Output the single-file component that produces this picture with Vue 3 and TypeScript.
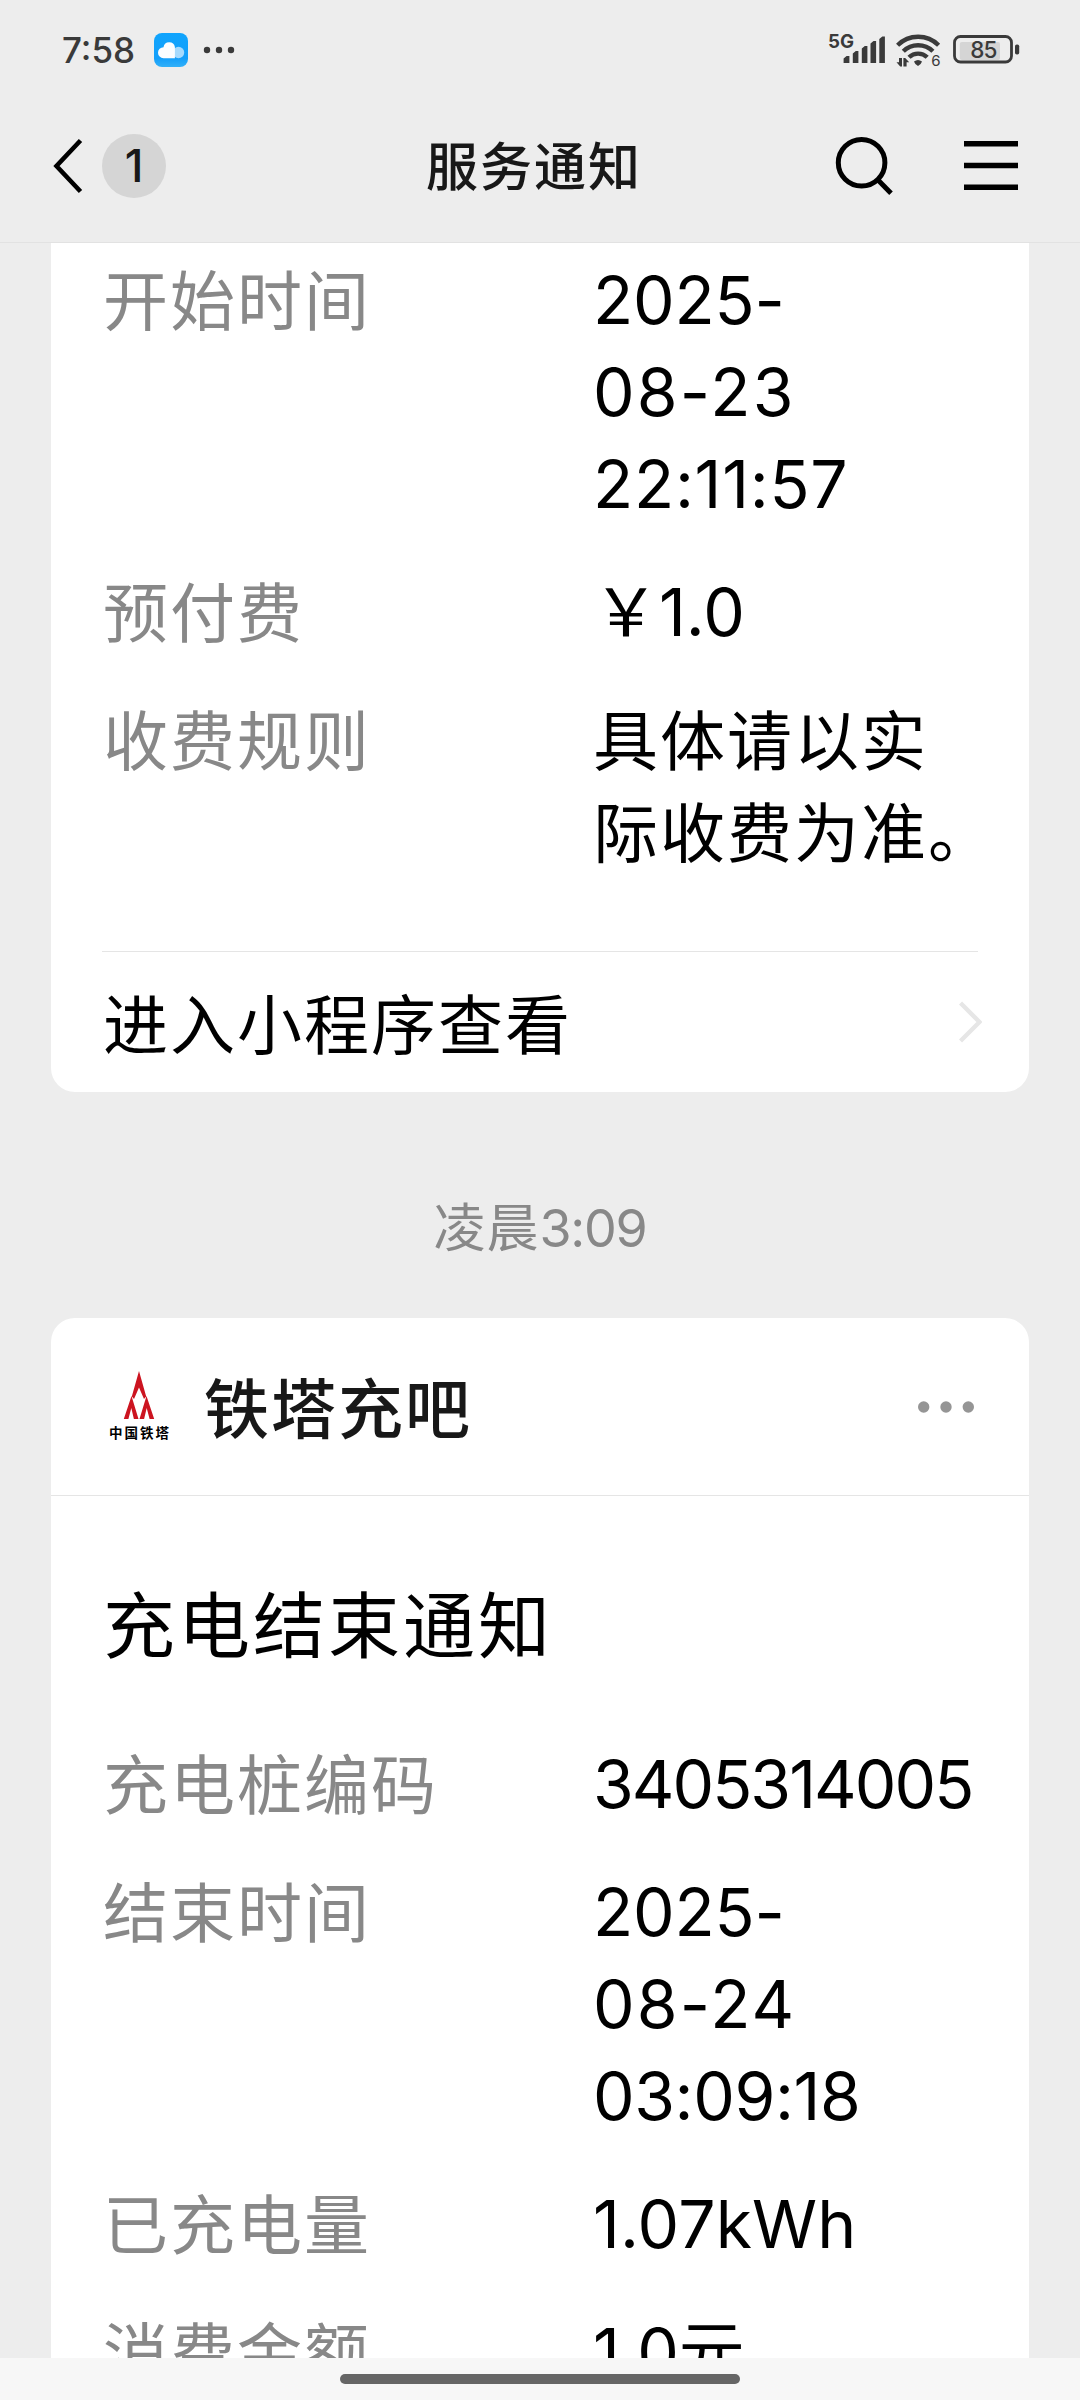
<script setup lang="ts">
interface Line {
  text: string
  spacing: number
  cjk?: boolean
}

interface Field {
  label: string
  value: Line[]
}

const startFields: Field[] = [
  {
    label: '开始时间',
    value: [
      { text: '2025-', spacing: -0.2 },
      { text: '08-23', spacing: 2.2 },
      { text: '22:11:57', spacing: 0.7 },
    ],
  },
  { label: '预付费', value: [{ text: '￥1.0', spacing: 0 }] },
  {
    label: '收费规则',
    value: [
      { text: '具体请以实', spacing: 2, cjk: true },
      { text: '际收费为准。', spacing: 2, cjk: true },
    ],
  },
]

const endFields: Field[] = [
  { label: '充电桩编码', value: [{ text: '3405314005', spacing: -1.95 }] },
  {
    label: '结束时间',
    value: [
      { text: '2025-', spacing: -0.2 },
      { text: '08-24', spacing: 2.2 },
      { text: '03:09:18', spacing: -0.4 },
    ],
  },
  { label: '已充电量', value: [{ text: '1.07kWh', spacing: 0.2 }] },
  { label: '消费金额', value: [{ text: '1.0元', spacing: 0 }] },
]
</script>

<template>
  <div class="screen">
    <div class="status">
      <span class="clock">7:58</span>
      <svg class="weather" width="34" height="34" viewBox="0 0 34 34">
        <defs>
          <linearGradient id="sky" x1="0" y1="0" x2="0" y2="1">
            <stop offset="0" stop-color="#0fa4fd" />
            <stop offset="0.75" stop-color="#149ffa" />
            <stop offset="1" stop-color="#32b0f8" />
          </linearGradient>
        </defs>
        <rect width="34" height="34" rx="8" fill="url(#sky)" />
        <circle cx="24.5" cy="19.5" r="5.7" fill="#a6dafd" />
        <path d="M9.5 25.2a5.5 5.5 0 0 1 0-11 5.8 5.8 0 0 1 11.4-.2V25.2z" fill="#fbfdff" />
      </svg>
      <svg class="more" width="32" height="8" viewBox="0 0 32 8">
        <circle cx="4" cy="4" r="3.2" />
        <circle cx="16" cy="4" r="3.2" />
        <circle cx="28" cy="4" r="3.2" />
      </svg>
      <svg class="signals" width="194" height="40" viewBox="0 0 194 40">
        <text class="net" x="0" y="18" textLength="26" lengthAdjust="spacingAndGlyphs">5G</text>
        <path
          d="M15.6 33v-4.5l3-2.500h2.800v7zM24.800 33v-9.500l3-2.500h2.600v12zM33.800 33v-14.500l3-2.500h2.600v17zM42.500 33v-19.500l3-2.500h2.600v22zM51.300 33v-24l3-2.500h2.600v26.500z"
        />
        <g fill="none" stroke="#3a3a3a" stroke-width="4.4">
          <path d="M69.600 15.300a29 29 0 0 1 41 0" />
          <path d="M75.300 21.300a21 21 0 0 1 29.600 0" />
          <path d="M81 27.300a13 13 0 0 1 18.200 0" />
        </g>
        <path d="M86 31.500q4-3.200 8 0l-1.400 2.600-2.600 1.800-2.600-1.800z" />
        <path d="M71 28h3v8.500h-1.800L68.500 32.200H71zM75.400 28h1.800l4 4.300h-2.600v4.200h-3.200z" />
        <text class="gen" x="103.300" y="36">6</text>
        <rect x="131.800" y="12" width="40.200" height="18" rx="2" fill="#d5d5d5" />
        <rect x="126.500" y="6.500" width="57" height="25.500" rx="6" fill="none" stroke="#3a3a3a" stroke-width="2.800" />
        <rect x="187" y="14.500" width="4.200" height="10" rx="1.800" />
        <text class="level" x="142.300" y="27.800" textLength="27" lengthAdjust="spacing">85</text>
      </svg>
    </div>

    <header class="nav">
      <svg class="back" width="30" height="56" viewBox="0 0 30 56">
        <path d="M27.500 2.500 3.500 28l24 25.500" fill="none" stroke="#000" stroke-width="4.600" />
      </svg>
      <span class="badge">1</span>
      <h1>服务通知</h1>
      <svg class="search" width="60" height="60" viewBox="0 0 60 60">
        <circle cx="27.600" cy="26.800" r="23.300" />
        <path d="M44.500 44.500 57 57.200" />
      </svg>
      <svg class="menu" width="54" height="50" viewBox="0 0 54 50">
        <path d="M0 2.700h54M0 24.500h54M0 46.300h54" stroke="#000" stroke-width="5.400" />
      </svg>
    </header>

    <main class="feed">
      <section class="card first">
        <dl class="fields">
          <div v-for="field in startFields" :key="field.label" class="field">
            <dt>{{ field.label }}</dt>
            <dd>
              <span
                v-for="line in field.value"
                :key="line.text"
                class="line"
                :class="{ cjk: line.cjk }"
                :style="{ letterSpacing: line.spacing + 'px' }"
              >{{ line.text }}</span>
            </dd>
          </div>
        </dl>
        <a class="enter">
          <span>进入小程序查看</span>
          <svg width="23" height="42" viewBox="0 0 23 42">
            <path d="M1.500 2 20.500 21l-19 19" fill="none" stroke="#e6e6e6" stroke-width="4.400" />
          </svg>
        </a>
      </section>

      <time class="moment">凌晨<span>3:09</span></time>

      <section class="card second">
        <div class="source">
          <svg class="logo" width="64" height="72" viewBox="0 0 64 72">
            <g fill="#cc1420">
              <path d="M32 0l7.200 25.500-2.200 2.500L32 16.500 27 28l-2.200-2.500z" />
              <path d="M24.500 25l7 23h-4.600l-2.600-11L21.400 48h-4.600z" />
              <path d="M39.500 25l7.700 23h-4.600l-2.900-11L37.100 48h-4.600z" />
            </g>
            <text x="2" y="67.300" textLength="60" lengthAdjust="spacing">中国铁塔</text>
          </svg>
          <h2>铁塔充吧</h2>
          <svg class="dots" width="56" height="12" viewBox="0 0 56 12">
            <circle cx="5.700" cy="6" r="5.700" />
            <circle cx="28" cy="6" r="5.700" />
            <circle cx="50.300" cy="6" r="5.700" />
          </svg>
        </div>
        <h3>充电结束通知</h3>
        <dl class="fields">
          <div v-for="field in endFields" :key="field.label" class="field">
            <dt>{{ field.label }}</dt>
            <dd>
              <span
                v-for="line in field.value"
                :key="line.text"
                class="line"
                :class="{ cjk: line.cjk }"
                :style="{ letterSpacing: line.spacing + 'px' }"
              >{{ line.text }}</span>
            </dd>
          </div>
        </dl>
      </section>
    </main>

    <footer class="gesture"><i></i></footer>
  </div>
</template>

<style>
body {
  margin: 0;
  background: #ededed;
}
</style>

<style scoped>
.screen {
  width: 1080px;
  height: 2400px;
  display: flex;
  flex-direction: column;
  overflow: hidden;
  background: #ededed;
  font-family: Inter, 'Noto Sans CJK SC', sans-serif;
  color: #000;
}

h1,
h2,
h3,
dl,
dd {
  margin: 0;
}

.status {
  flex: none;
  height: 100px;
  display: flex;
  align-items: center;
  padding: 0 60px 0 62px;
  box-sizing: border-box;
  color: #3a3a3a;
  fill: #3a3a3a;
}

.clock {
  width: 92px;
  font-size: 35px;
  font-weight: 500;
  line-height: 40px;
}

.more {
  margin-left: 15px;
}

.signals {
  margin-left: auto;
  margin-right: -2px;
}

.net {
  font-size: 19px;
  font-weight: 700;
}

.gen {
  font-size: 15px;
}

.level {
  font-size: 22.5px;
  font-weight: 500;
}

.nav {
  flex: none;
  height: 143px;
  display: flex;
  align-items: center;
  padding: 0 62px 10px 53px;
  box-sizing: border-box;
  border-bottom: 1px solid #e2e2e2;
}

.badge {
  width: 64px;
  height: 64px;
  margin-left: 19px;
  border-radius: 50%;
  background: #d5d5d5;
  color: #181818;
  font-size: 45px;
  font-weight: 500;
  line-height: 64px;
  text-align: center;
}

.nav h1 {
  margin-left: 260px;
  padding-top: 4px;
  color: #181818;
  font-size: 52px;
  font-weight: 500;
  letter-spacing: 2px;
  line-height: 64px;
}

.search {
  margin-left: auto;
  fill: none;
  stroke: #000;
  stroke-width: 5px;
}

.menu {
  margin-left: 70px;
}

.feed {
  flex: 1;
  min-height: 0;
  overflow: hidden;
  display: flex;
  flex-direction: column;
  padding: 0 51px;
}

.card {
  flex: none;
  background: #fff;
}

.first {
  height: 849px;
  display: flex;
  flex-direction: column;
  padding: 11px 51px 0;
  box-sizing: border-box;
  border-radius: 0 0 24px 24px;
}

.fields {
  display: flex;
  flex-direction: column;
  gap: 36px;
  font-size: 66px;
  line-height: 92px;
}

.field {
  display: flex;
}

.field dt {
  width: 490px;
  padding: 2px 0 0 1px;
  margin-bottom: -2px;
  flex: none;
  color: #888;
  font-size: 65px;
  letter-spacing: 2px;
}

.line {
  display: block;
  white-space: nowrap;
}

.line.cjk {
  font-size: 65px;
  padding-top: 2px;
  margin-bottom: -2px;
}

.enter {
  height: 140px;
  margin-top: auto;
  display: flex;
  align-items: center;
  justify-content: space-between;
  border-top: 1px solid #e5e5e5;
}

.enter span {
  padding: 8px 0 0 1px;
  font-size: 65px;
  letter-spacing: 2px;
  line-height: 92px;
}

.enter svg {
  margin-right: -4px;
}

.moment {
  flex: none;
  height: 226px;
  text-align: center;
  color: #888;
  font-size: 52px;
  letter-spacing: 1px;
  line-height: 273px;
}

.moment span {
  letter-spacing: -1.3px;
}

.second {
  border-radius: 24px 24px 0 0;
}

.source {
  height: 178px;
  display: flex;
  align-items: center;
  padding: 0 55px 0 56px;
  box-sizing: border-box;
  border-bottom: 1px solid #e5e5e5;
}

.logo {
  margin-top: 1px;
}

.logo text {
  font-size: 13.5px;
  font-weight: 700;
}

.source h2 {
  margin-left: 33px;
  padding-top: 7px;
  color: #181818;
  font-size: 65px;
  font-weight: 500;
  letter-spacing: 2px;
  line-height: 92px;
}

.dots {
  margin-left: auto;
  fill: #959595;
}

.second h3 {
  height: 242px;
  padding: 0 52px;
  font-size: 72px;
  font-weight: 400;
  letter-spacing: 3px;
  line-height: 259px;
}

.second .fields {
  padding: 0 51px;
}

.gesture {
  flex: none;
  height: 42px;
  display: flex;
  justify-content: center;
  padding-top: 16px;
  box-sizing: border-box;
  background: #f7f7f7;
}

.gesture i {
  width: 400px;
  height: 10px;
  border-radius: 5px;
  background: #666;
}
</style>
